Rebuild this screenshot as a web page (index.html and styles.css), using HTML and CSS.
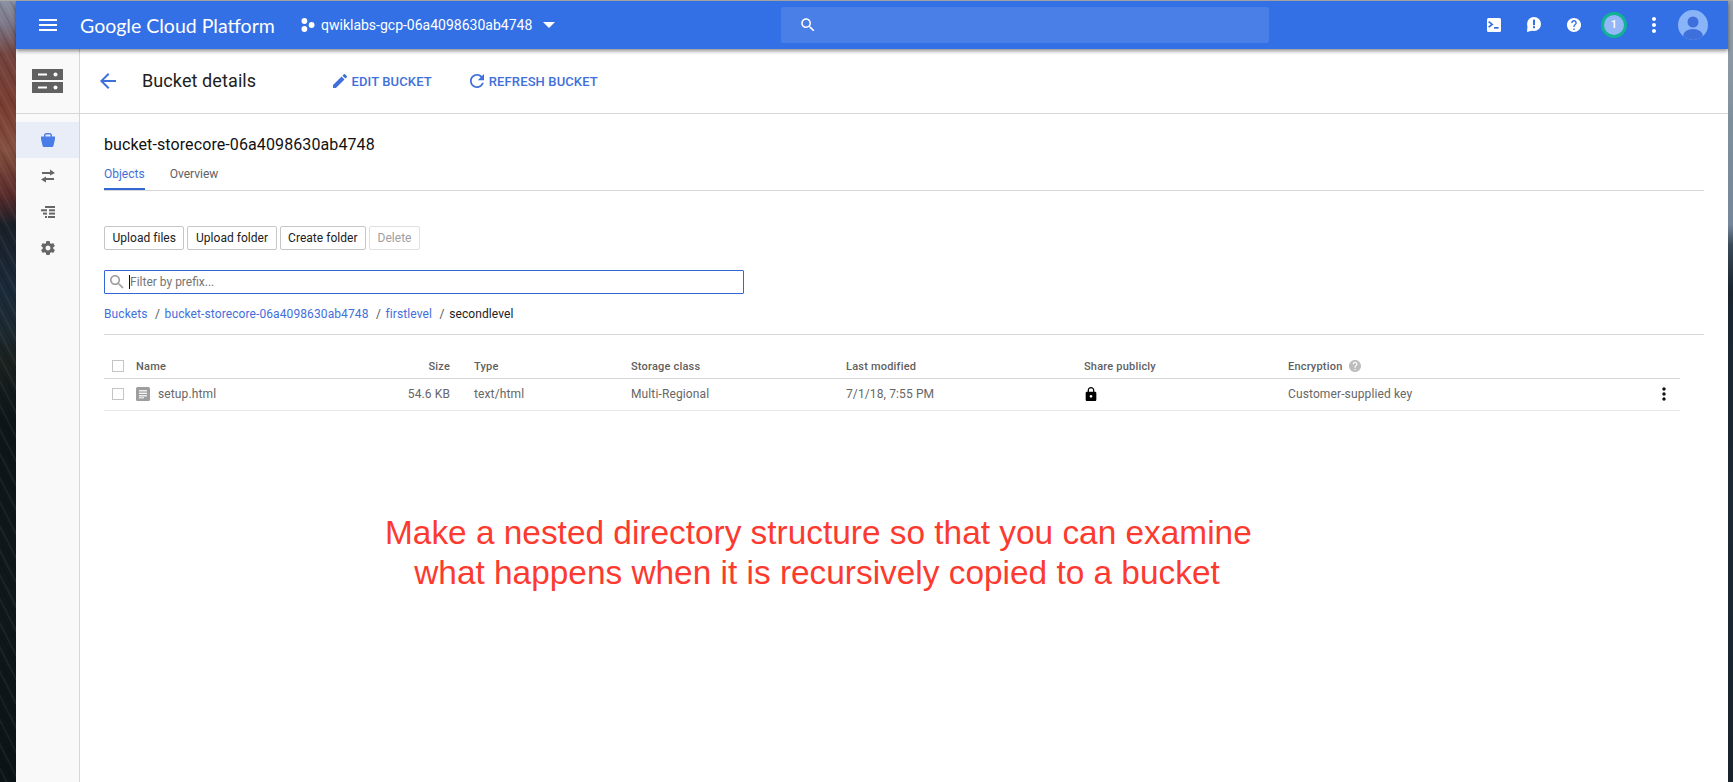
FILE: index.html
```html
<!DOCTYPE html>
<html lang="en">
<head>
<meta charset="utf-8">
<title>Bucket details</title>
<link rel="stylesheet" href="styles.css">
</head>
<body>
<div class="window">
  <header class="topbar">
    <div class="brand">
      <svg class="ic-menu" viewBox="0 0 24 24"><path fill="#fff" d="M3 18h18v-2H3v2zm0-5h18v-2H3v2zm0-7v2h18V6H3z"/></svg>
      <span class="logo">Google Cloud Platform</span>
      <svg class="ic-project" viewBox="0 0 14 14"><circle cx="3.400" cy="3" r="2.900" fill="#fff"/><circle cx="3.400" cy="11" r="2.900" fill="#fff"/><circle cx="10.600" cy="7" r="2.900" fill="#fff"/></svg>
      <span class="project">qwiklabs-gcp-06a4098630ab4748</span>
      <span class="caret"></span>
    </div>
    <div class="search">
      <svg class="ic-search" viewBox="0 0 24 24"><path fill="#fff" d="M15.500 14h-.79l-.28-.27C15.410 12.590 16 11.110 16 9.500 16 5.910 13.090 3 9.500 3S3 5.910 3 9.500 5.910 16 9.500 16c1.610 0 3.090-.59 4.230-1.570l.27.28v.79l5 4.990L20.490 19l-4.990-5zm-6 0C7.010 14 5 11.990 5 9.500S7.010 5 9.500 5 14 7.010 14 9.500 11.990 14 9.500 14z"/></svg>
    </div>
    <div class="tools">
      <span class="tool"><svg class="ic-14" viewBox="0 0 14 14"><rect width="14" height="14" rx="1.500" fill="#fff"/><path d="M1.600 3.600 5.200 6.400 1.600 9.200" fill="none" stroke="#3370e5" stroke-width="1.700"/><rect x="7" y="9" width="4.600" height="1.700" fill="#3370e5"/></svg></span>
      <span class="tool"><svg class="ic-16" viewBox="0 0 16 16"><circle cx="8" cy="7" r="7" fill="#fff"/><path d="M1.500 9.500 1 15 6.500 13.500z" fill="#fff"/><rect x="7" y="2.600" width="2" height="5.600" fill="#3370e5"/><rect x="7" y="9.200" width="2" height="2" fill="#3370e5"/></svg></span>
      <span class="tool"><svg class="ic-help" viewBox="2 2 20 20"><path fill="#fff" d="M12 2C6.480 2 2 6.480 2 12s4.480 10 10 10 10-4.480 10-10S17.520 2 12 2zm1 17h-2v-2h2v2zm2.070-7.750l-.9.92C13.450 12.900 13 13.500 13 15h-2v-.5c0-1.100.45-2.100 1.170-2.830l1.240-1.260c.37-.36.59-.86.59-1.410 0-1.100-.9-2-2-2s-2 .9-2 2H8c0-2.210 1.790-4 4-4s4 1.790 4 4c0 .88-.36 1.680-.93 2.250z"/></svg></span>
      <span class="tool"><span class="badge">1</span></span>
      <span class="tool"><svg class="ic-more" viewBox="0 0 24 24"><path fill="#fff" d="M12 8c1.100 0 2-.9 2-2s-.9-2-2-2-2 .9-2 2 .9 2 2 2zm0 2c-1.100 0-2 .9-2 2s.9 2 2 2 2-.9 2-2-.9-2-2-2zm0 6c-1.100 0-2 .9-2 2s.9 2 2 2 2-.9 2-2-.9-2-2-2z"/></svg></span>
      <span class="tool"><svg class="ic-avatar" viewBox="0 0 30 30"><defs><clipPath id="av"><circle cx="15" cy="15" r="15"/></clipPath></defs><circle cx="15" cy="15" r="15" fill="#8ab4f8"/><g clip-path="url(#av)"><circle cx="15" cy="12" r="5.500" fill="#3f6fdb"/><ellipse cx="15" cy="26" rx="10" ry="7" fill="#3f6fdb"/></g></svg></span>
    </div>
  </header>

  <div class="subbar">
    <div class="product">
      <svg class="ic-storage" viewBox="0 0 31 24"><rect width="31" height="11" fill="#616161"/><rect y="13" width="31" height="11" fill="#616161"/><rect x="6" y="4.500" width="9" height="2" fill="#fff"/><circle cx="23.500" cy="5.500" r="2" fill="#fff"/><rect x="6" y="17.500" width="9" height="2" fill="#fff"/><circle cx="23.500" cy="18.500" r="2" fill="#fff"/></svg>
    </div>
    <div class="actions">
      <svg class="ic-back" viewBox="0 0 24 24"><path fill="#3f6fdb" d="M20 11H7.830l5.590-5.590L12 4l-8 8 8 8 1.410-1.410L7.830 13H20v-2z"/></svg>
      <h1 class="page-title">Bucket details</h1>
      <a class="action action-edit"><svg class="ic-action" viewBox="3 3 18 18"><path fill="#3f6fdb" d="M3 17.250V21h3.750L17.810 9.940l-3.750-3.750L3 17.250zM20.710 7.040c.39-.39.39-1.020 0-1.410l-2.340-2.340c-.39-.39-1.020-.39-1.410 0l-1.830 1.830 3.750 3.750 1.830-1.830z"/></svg>EDIT BUCKET</a>
      <a class="action action-refresh"><svg class="ic-action" viewBox="4 4 16 16"><path fill="#3f6fdb" d="M17.650 6.350C16.200 4.900 14.210 4 12 4c-4.420 0-7.990 3.580-7.990 8s3.570 8 7.990 8c3.730 0 6.840-2.550 7.730-6h-2.080c-.82 2.330-3.040 4-5.650 4-3.310 0-6-2.690-6-6s2.690-6 6-6c1.660 0 3.140.69 4.220 1.780L13 11h7V4l-2.350 2.350z"/></svg>REFRESH BUCKET</a>
    </div>
  </div>

  <div class="body">
    <nav class="sidebar">
      <a class="nav-item active"><svg class="ic-nav" viewBox="0 0 14 14"><path fill="#4a7ce8" d="M3 4V2.500C3 1 4 0 5.500 0h3C10 0 11 1 11 2.500V4H9.500V2.500c0-.6-.4-1-1-1h-3c-.6 0-1 .4-1 1V4z"/><path fill="#4a7ce8" d="M0 3.500h14v2.500l-1.500 6.500c-.2 1-.9 1.500-1.800 1.500H3.300c-.9 0-1.600-.5-1.800-1.500L0 6z"/></svg></a>
      <a class="nav-item"><svg class="ic-nav" viewBox="0 0 14 13"><path fill="#666" d="M1 2.500h8V0l5 3.500L9 6V4.500H1z"/><path fill="#666" d="M13 8.500H5V7L0 10l5 3v-2.500h8z"/></svg></a>
      <a class="nav-item"><svg class="ic-nav ic-tasks" viewBox="0 0 14 12"><g fill="#666"><rect x="4" y="0" width="10" height="2"/><rect x="0" y="3.300" width="6" height="2"/><rect x="8" y="3.300" width="6" height="2"/><rect x="2" y="6.600" width="4" height="2"/><rect x="8" y="6.600" width="6" height="2"/><rect x="4" y="10" width="2" height="2"/><rect x="7" y="10" width="7" height="2"/></g></svg></a>
      <a class="nav-item"><svg class="ic-nav" viewBox="2 2 20 20"><path fill="#666" d="M19.430 12.980c.04-.32.07-.64.07-.98s-.03-.66-.07-.98l2.110-1.650c.19-.15.24-.42.12-.64l-2-3.460c-.12-.22-.39-.3-.61-.22l-2.490 1c-.52-.4-1.080-.73-1.690-.98l-.38-2.650C14.460 2.180 14.250 2 14 2h-4c-.25 0-.46.18-.49.42l-.38 2.650c-.61.25-1.170.59-1.690.98l-2.490-1c-.23-.09-.49 0-.61.22l-2 3.460c-.13.22-.07.49.12.64l2.110 1.650c-.04.32-.07.65-.07.98s.03.66.07.98l-2.110 1.650c-.19.15-.24.42-.12.64l2 3.460c.12.22.39.3.61.22l2.490-1c.52.4 1.080.73 1.690.98l.38 2.650c.03.24.24.42.49.42h4c.25 0 .46-.18.49-.42l.38-2.650c.61-.25 1.170-.59 1.690-.98l2.490 1c.23.09.49 0 .61-.22l2-3.460c.12-.22.07-.49-.12-.64l-2.110-1.650zM12 15.500c-1.930 0-3.500-1.570-3.500-3.500s1.570-3.500 3.500-3.500 3.500 1.570 3.500 3.500-1.570 3.500-3.500 3.500z"/></svg></a>
    </nav>

    <main class="main">
      <h2 class="bucket-name">bucket-storecore-06a4098630ab4748</h2>
      <div class="tabs">
        <a class="tab tab-active">Objects</a>
        <a class="tab">Overview</a>
      </div>
      <div class="buttons">
        <button class="btn">Upload files</button>
        <button class="btn">Upload folder</button>
        <button class="btn">Create folder</button>
        <button class="btn btn-disabled">Delete</button>
      </div>
      <div class="filter">
        <svg class="ic-filter" viewBox="3 3 18 18"><path fill="#9e9e9e" d="M15.500 14h-.79l-.28-.27C15.410 12.590 16 11.110 16 9.500 16 5.910 13.090 3 9.500 3S3 5.910 3 9.500 5.910 16 9.500 16c1.610 0 3.090-.59 4.230-1.570l.27.28v.79l5 4.990L20.490 19l-4.990-5zm-6 0C7.010 14 5 11.990 5 9.500S7.010 5 9.500 5 14 7.010 14 9.500 11.990 14 9.500 14z"/></svg>
        <span class="cursor"></span>
        <span class="placeholder">Filter by prefix...</span>
      </div>
      <div class="crumbs">
        <a class="crumb">Buckets</a><span class="sep">/</span><a class="crumb">bucket-storecore-06a4098630ab4748</a><span class="sep">/</span><a class="crumb">firstlevel</a><span class="sep">/</span><span class="crumb-current">secondlevel</span>
      </div>
      <div class="table">
        <div class="tr th">
          <span class="cell"><span class="check"></span></span>
          <span class="cell">Name</span>
          <span class="cell cell-size">Size</span>
          <span class="cell">Type</span>
          <span class="cell">Storage class</span>
          <span class="cell">Last modified</span>
          <span class="cell">Share publicly</span>
          <span class="cell">Encryption<svg class="ic-q" viewBox="2 2 20 20"><path fill="#bdbdbd" d="M12 2C6.480 2 2 6.480 2 12s4.480 10 10 10 10-4.480 10-10S17.520 2 12 2zm1 17h-2v-2h2v2zm2.070-7.750l-.9.92C13.450 12.900 13 13.500 13 15h-2v-.5c0-1.100.45-2.100 1.170-2.830l1.240-1.260c.37-.36.59-.86.59-1.410 0-1.100-.9-2-2-2s-2 .9-2 2H8c0-2.210 1.790-4 4-4s4 1.790 4 4c0 .88-.36 1.680-.93 2.250z"/></svg></span>
          <span class="cell"></span>
        </div>
        <div class="tr td">
          <span class="cell"><span class="check"></span></span>
          <span class="cell"><svg class="ic-file" viewBox="0 0 14 14"><rect width="14" height="14" rx="1.500" fill="#9e9e9e"/><rect x="3" y="3.200" width="8" height="1.200" fill="#fff"/><rect x="3" y="5.700" width="8" height="1.200" fill="#fff"/><rect x="3" y="8.200" width="8" height="1.200" fill="#fff"/><rect x="3" y="10.300" width="5" height="1" fill="#fff"/></svg>setup.html</span>
          <span class="cell cell-size">54.6 KB</span>
          <span class="cell">text/html</span>
          <span class="cell">Multi-Regional</span>
          <span class="cell">7/1/18, 7:55 PM</span>
          <span class="cell"><svg class="ic-lock" viewBox="4 1 16 21"><path fill="#000" d="M18 8h-1V6c0-2.760-2.240-5-5-5S7 3.240 7 6v2H6c-1.100 0-2 .9-2 2v10c0 1.100.9 2 2 2h12c1.100 0 2-.9 2-2V10c0-1.100-.9-2-2-2zm-6 9c-1.100 0-2-.9-2-2s.9-2 2-2 2 .9 2 2-.9 2-2 2zm3.100-9H8.900V6c0-1.710 1.390-3.100 3.100-3.100 1.710 0 3.100 1.390 3.100 3.100v2z"/></svg></span>
          <span class="cell">Customer-supplied key</span>
          <span class="cell cell-more"><svg class="ic-kebab" viewBox="0 0 24 24"><path fill="#111" d="M12 8c1.100 0 2-.9 2-2s-.9-2-2-2-2 .9-2 2 .9 2 2 2zm0 2c-1.100 0-2 .9-2 2s.9 2 2 2 2-.9 2-2-.9-2-2-2zm0 6c-1.100 0-2 .9-2 2s.9 2 2 2 2-.9 2-2-.9-2-2-2z"/></svg></span>
        </div>
      </div>
    </main>
  </div>

  <p class="annotation">Make a nested directory structure so that you can examine<br>what happens when it is recursively copied to a bucket</p>
</div>
</body>
</html>
```

FILE: styles.css
```css
* { box-sizing: border-box; }
html, body { margin: 0; height: 100%; }
body {
  height: 782px;
  overflow: hidden;
  padding: 1px 5px 0 16px;
  font-family: Roboto, "Liberation Sans", sans-serif;
  background:
    linear-gradient(to bottom, #aaa 0, #aaa 1px, transparent 1px) no-repeat,
    repeating-linear-gradient(63deg, rgba(0, 0, 0, .1) 0 2px, transparent 2px 5px, rgba(255, 220, 200, .05) 5px 7px, transparent 7px 11px) left top / 16px 100% no-repeat,
    linear-gradient(to bottom, #8a92a4 0, #7c7687 25px, #74443e 55px, #7a3e32 105px, #84503f 150px, #5a2c2c 195px, #1a2029 225px, #1a2a3a 290px, #1c2a32 330px, #1a211f 360px, #0e1519 420px, #11181c 600px, #0c1316 782px) left top / 16px 100% no-repeat,
    linear-gradient(to bottom, #9aa3ad 0, #7f909c 120px, #74879a 225px, #3a4a58 245px, #1a2530 290px, #1c2a36 500px, #18222c 782px) right top / 5px 100% no-repeat,
    #fff;
}
.window {
  position: relative;
  height: 781px;
  background: #fff;
  display: flex;
  flex-direction: column;
}

/* top bar */
.topbar {
  position: relative;
  z-index: 2;
  flex: none;
  height: 48px;
  display: flex;
  align-items: center;
  background: #3370e5;
  color: #fff;
  box-shadow: 0 2px 4px rgba(0, 0, 0, .45);
}
.brand {
  flex: none;
  width: 765px;
  display: flex;
  align-items: center;
  padding-left: 20px;
}
.ic-menu { width: 24px; height: 24px; flex: none; }
.logo {
  margin-left: 20px;
  width: 194px;
  font-family: Lato, "Open Sans", sans-serif;
  font-size: 19.5px;
  white-space: nowrap;
}
.ic-project { width: 14px; height: 14px; margin-left: 27px; flex: none; }
.project {
  margin-left: 6px;
  font-size: 14px;
  white-space: nowrap;
  width: 211px;
}
.caret {
  margin-left: 11px;
  width: 0;
  height: 0;
  border-left: 6px solid transparent;
  border-right: 6px solid transparent;
  border-top: 6px solid #fff;
}
.search {
  flex: none;
  width: 488px;
  height: 36px;
  display: flex;
  align-items: center;
  padding-left: 18px;
  border-radius: 2px;
  background: #4a7fe8;
}
.ic-search { width: 18px; height: 18px; }
.tools {
  flex: 1;
  display: flex;
  justify-content: flex-end;
  padding-right: 15px;
}
.tool {
  width: 40px;
  height: 32px;
  display: flex;
  align-items: center;
  justify-content: center;
}
.tool:nth-child(-n+5) { position: relative; left: 1px; }
.ic-14 { width: 14px; height: 14px; }
.ic-16 { width: 16px; height: 16px; }
.ic-help { width: 14px; height: 14px; }
.ic-more { width: 24px; height: 24px; }
.ic-avatar { width: 30px; height: 30px; }
.badge {
  width: 26px;
  height: 26px;
  border-radius: 50%;
  border: 3px solid #12b294;
  background: #94b7f8;
  color: #fff;
  font-size: 11px;
  font-weight: 500;
  line-height: 20px;
  text-align: center;
}

/* sub bar */
.subbar {
  flex: none;
  height: 65px;
  display: flex;
  border-bottom: 1px solid #d6d6d6;
}
.product {
  flex: none;
  width: 64px;
  display: flex;
  align-items: center;
  justify-content: center;
  padding-right: 1px;
  background: #f9f9f9;
  border-right: 1px solid #d6d6d6;
}
.ic-storage { width: 31px; height: 24px; }
.actions {
  flex: 1;
  display: flex;
  align-items: center;
  padding-left: 17px;
}
.ic-back { width: 24px; height: 24px; flex: none; margin-left: -1px; }
.page-title {
  margin: -2px 0 0 22px;
  width: 189.5px;
  font-size: 18px;
  font-weight: 400;
  letter-spacing: .1px;
  color: #212121;
  white-space: nowrap;
}
.action {
  display: flex;
  align-items: center;
  font-size: 13px;
  font-weight: 500;
  letter-spacing: .12px;
  color: #3f6fdb;
  white-space: nowrap;
}
.ic-action { width: 14px; height: 14px; margin-right: 5px; flex: none; }
.action-edit { margin-left: 1px; }
.action-refresh { margin-left: 38px; }

/* body */
.body {
  flex: 1;
  min-height: 0;
  display: flex;
}
.sidebar {
  flex: none;
  width: 64px;
  padding-top: 8px;
  background: #f9f9f9;
  border-right: 1px solid #d6d6d6;
}
.nav-item {
  height: 36px;
  display: flex;
  align-items: center;
  justify-content: center;
}
.nav-item.active { background: #e8edf8; }
.ic-nav { width: 14px; height: 14px; }
.ic-tasks { height: 12px; }
.main {
  flex: 1;
  min-width: 0;
  padding: 21px 24px 0;
}
.bucket-name {
  margin: 0;
  font-size: 16px;
  font-weight: 400;
  line-height: 20px;
  letter-spacing: .1px;
  color: #111;
}
.tabs {
  display: flex;
  margin-top: 5px;
  border-bottom: 1px solid #d6d6d6;
}
.tab {
  padding: 6px 0 8px;
  font-size: 12px;
  line-height: 16px;
  color: #616161;
  margin-right: 25px;
}
.tab-active {
  color: #3f6fdb;
  box-shadow: inset 0 -2px 0 #3367d6;
}
.buttons {
  display: flex;
  gap: 3px;
  margin-top: 35px;
}
.btn {
  height: 24px;
  padding: 0 7.5px;
  font: 400 12px Roboto, "Liberation Sans", sans-serif;
  letter-spacing: .03px;
  color: #212121;
  background: #fff;
  border: 1px solid #c6c6c6;
  border-radius: 2px;
}
.btn-disabled {
  color: #9e9e9e;
  border-color: #e0e0e0;
}
.filter {
  margin-top: 20px;
  width: 640px;
  height: 24px;
  display: flex;
  align-items: center;
  padding-left: 5px;
  border: 1px solid #3367d6;
  border-radius: 1px;
}
.ic-filter { width: 14px; height: 14px; flex: none; }
.cursor {
  width: 1px;
  height: 14px;
  margin-left: 5px;
  background: #111;
  flex: none;
}
.placeholder {
  font-size: 12px;
  color: #757575;
}
.crumbs {
  margin-top: 12px;
  font-size: 12px;
  line-height: 16px;
  letter-spacing: .1px;
  white-space: nowrap;
}
.crumb { color: #3f6fdb; }
.crumb-current { color: #212121; }
.sep {
  color: #555;
  margin: 0 4.5px 0 7.5px;
}
.table {
  margin-top: 12px;
  padding: 19px 24px 0 0;
  border-top: 1px solid #d6d6d6;
}
.tr {
  display: grid;
  grid-template-columns: 32px 250px 88px 157px 215px 238px 204px 364px 28px;
  align-items: center;
}
.th {
  height: 25px;
  font-size: 11px;
  font-weight: 500;
  letter-spacing: .2px;
  color: #5f5f5f;
  border-bottom: 1px solid #d6d6d6;
}
.td {
  height: 32px;
  padding-bottom: 1px;
  font-size: 12px;
  letter-spacing: .12px;
  color: #666;
  border-bottom: 1px solid #e8e8e8;
}
.cell {
  display: flex;
  align-items: center;
  white-space: nowrap;
}
.cell-size {
  justify-content: flex-end;
  padding-right: 24px;
}
.cell-more {
  justify-content: center;
  padding-right: 5px;
}
.check {
  width: 12px;
  height: 12px;
  margin-left: 8px;
  border: 1px solid #c4c4c4;
  background: #fff;
}
.ic-q { width: 12px; height: 12px; margin-left: 7px; }
.ic-file { width: 14px; height: 14px; margin-right: 8px; flex: none; }
.ic-lock { width: 12px; height: 14px; margin-left: 1px; }
.ic-kebab { width: 20px; height: 20px; }

/* annotation laid over the page */
.annotation {
  position: absolute;
  left: 369px;
  top: 512px;
  width: 864px;
  margin: 0;
  font-family: "Liberation Sans", Arial, sans-serif;
  font-size: 33.4px;
  line-height: 40px;
  text-align: center;
  white-space: nowrap;
  color: #fc3a30;
}
```
